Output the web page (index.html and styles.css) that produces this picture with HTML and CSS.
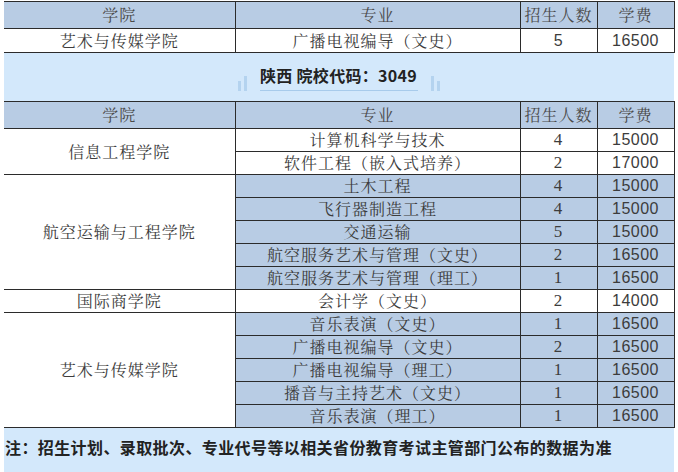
FILE: index.html
```html
<!DOCTYPE html>
<html lang="zh-CN">
<head>
<meta charset="utf-8">
<title>招生计划</title>
<link rel="stylesheet" href="styles.css">
</head>
<body>
<div class="page">
  <table class="plan plan-top">
    <colgroup><col class="c1"><col class="c2"><col class="c3"><col class="c4"></colgroup>
    <tr class="head"><td>学院</td><td>专业</td><td>招生人数</td><td>学费</td></tr>
    <tr class="row tall"><td>艺术与传媒学院</td><td>广播电视编导（文史）</td><td class="sans">5</td><td class="sans">16500</td></tr>
  </table>

  <div class="band">
    <span class="deco deco-left"><i class="b short"></i><i class="b long"></i></span>
    <span class="title">陕西 院校代码：3049</span>
    <span class="deco deco-right"><i class="b long"></i><i class="b short"></i></span>
  </div>

  <table class="plan">
    <colgroup><col class="c1"><col class="c2"><col class="c3"><col class="c4"></colgroup>
    <tr class="head"><td>学院</td><td>专业</td><td>招生人数</td><td>学费</td></tr>
    <tr class="row"><td class="college" rowspan="2">信息工程学院</td><td>计算机科学与技术</td><td class="num">4</td><td class="sans">15000</td></tr>
    <tr class="row"><td>软件工程（嵌入式培养）</td><td class="num">2</td><td class="sans">17000</td></tr>
    <tr class="row blue"><td class="college" rowspan="5">航空运输与工程学院</td><td>土木工程</td><td class="num">4</td><td class="sans">15000</td></tr>
    <tr class="row blue"><td>飞行器制造工程</td><td class="num">4</td><td class="sans">15000</td></tr>
    <tr class="row blue"><td>交通运输</td><td class="num">5</td><td class="sans">15000</td></tr>
    <tr class="row blue"><td>航空服务艺术与管理（文史）</td><td class="num">2</td><td class="sans">16500</td></tr>
    <tr class="row blue"><td>航空服务艺术与管理（理工）</td><td class="num">1</td><td class="sans">16500</td></tr>
    <tr class="row"><td class="college">国际商学院</td><td>会计学（文史）</td><td class="num">2</td><td class="sans">14000</td></tr>
    <tr class="row blue"><td class="college" rowspan="5">艺术与传媒学院</td><td>音乐表演（文史）</td><td class="num">1</td><td class="sans">16500</td></tr>
    <tr class="row blue"><td>广播电视编导（文史）</td><td class="num">2</td><td class="sans">16500</td></tr>
    <tr class="row blue"><td>广播电视编导（理工）</td><td class="num">1</td><td class="sans">16500</td></tr>
    <tr class="row blue"><td>播音与主持艺术（文史）</td><td class="num">1</td><td class="sans">16500</td></tr>
    <tr class="row blue"><td>音乐表演（理工）</td><td class="num">1</td><td class="sans">16500</td></tr>
  </table>

  <div class="note">注：招生计划、录取批次、专业代号等以相关省份教育考试主管部门公布的数据为准</div>
</div>
</body>
</html>
```

FILE: styles.css
```css
html, body {
  margin: 0;
  padding: 0;
  background: #ffffff;
}

.page {
  width: 670px;
  margin: 1px 0 0 4px;
}

.plan {
  width: 670px;
  table-layout: fixed;
  border-collapse: collapse;
  font-family: "Noto Serif CJK SC", "Noto Sans CJK SC", serif;
  font-size: 16px;
  color: #3c3c3c;
}

.plan col.c1 { width: 231px; }
.plan col.c2 { width: 285px; }
.plan col.c3 { width: 77px; }
.plan col.c4 { width: 77px; }

.plan td {
  padding: 0;
  text-align: center;
  vertical-align: middle;
  line-height: 18px;
  letter-spacing: 1px;
  white-space: nowrap;
  border-left: 1px solid #2b2b2b;
  border-right: 1px solid #2b2b2b;
  border-top: 1px solid #2b2b2b;
  border-bottom: 1px solid #2b2b2b;
}

.plan td:first-child {
  border-left: none;
}

.plan tr.head td {
  background: #b8cce4;
  color: #4a4a4a;
  height: 26px;
}

.plan tr.row td {
  height: 22px;
}

.plan-top tr.tall td {
  height: 23px;
}

.plan tr.blue td {
  background: #b8cce4;
}

.plan tr.blue td.college,
.plan td.college {
  background: #ffffff;
}

.plan td.sans {
  font-family: "Liberation Sans", Arial, sans-serif;
  letter-spacing: 0.5px;
}

.plan td.num {
  font-family: "Liberation Serif", "Times New Roman", serif;
  font-size: 17px;
}

.band {
  height: 48px;
  background: #d3e8fb;
  display: flex;
  justify-content: center;
  align-items: flex-end;
  gap: 13px;
  padding-bottom: 10px;
  box-sizing: border-box;
}

.title {
  font-family: "Noto Sans CJK SC", "Open Sans", sans-serif;
  font-weight: bold;
  font-size: 16px;
  line-height: 20px;
  color: #222222;
  padding: 0 1px 5px 0;
  border-bottom: 1px solid #a8cbeb;
  letter-spacing: 0.3px;
}

.deco {
  display: flex;
  align-items: flex-end;
  gap: 3px;
  height: 16px;
  margin-bottom: 0;
}

.deco .b {
  display: block;
  width: 3px;
  background: #b4d3ef;
}

.deco .short { height: 10px; }
.deco .long { height: 15px; }

.note {
  height: 44px;
  background: #d3e8fb;
  font-family: "Noto Sans CJK SC", "Open Sans", sans-serif;
  font-weight: bold;
  font-size: 16px;
  line-height: 20px;
  color: #222222;
  padding: 9px 0 0 1px;
  box-sizing: border-box;
  letter-spacing: 0.4px;
  white-space: nowrap;
}
```
